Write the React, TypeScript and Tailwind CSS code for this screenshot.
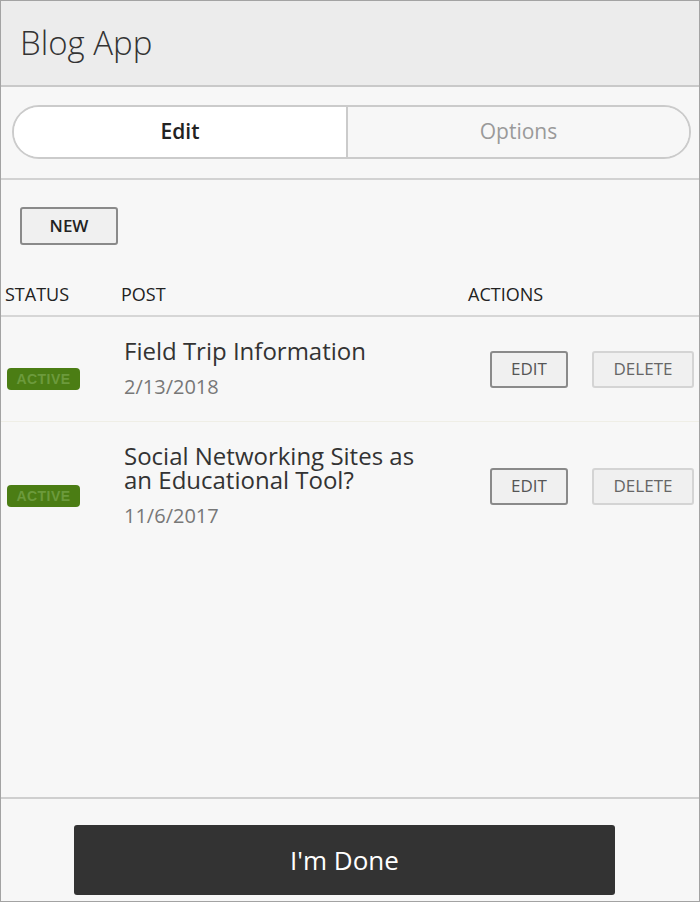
import React from "react"

const posts = [
  { title: "Field Trip Information", date: "2/13/2018" },
  { title: "Social Networking Sites as an Educational Tool?", date: "11/6/2017" },
]

function Badge() {
  return (
    <span className="inline-flex items-center justify-center w-[73px] h-[22px] rounded-[4px] bg-[#4b7d14] text-[14px] font-bold tracking-[0.03em] text-[#6c9a3c] font-['Liberation_Sans',sans-serif]">
      ACTIVE
    </span>
  )
}

export default function App() {
  return (
    <div className="w-[700px] h-[902px] flex flex-col border border-[#a3a3a3] bg-[#f7f7f7] font-['Open_Sans',sans-serif] text-[#333]">
      {/* Header */}
      <div className="h-[86px] shrink-0 bg-[#ececec] border-b-2 border-[#c9c9c9] flex items-center px-[19px]">
        <h1 className="text-[33px] font-light text-[#333] leading-none pb-[2px]">Blog App</h1>
      </div>

      {/* Tabs */}
      <div className="h-[93px] shrink-0 border-b-2 border-[#d2d2d2] pl-[11px] pr-[8px] pt-[18px]">
        <div className="flex h-[54px] rounded-full border-2 border-[#cbcbcb] overflow-hidden">
          <div className="w-[334px] shrink-0 bg-white flex items-center justify-center text-[21px] font-semibold text-[#222] border-r-2 border-[#cbcbcb]">
            Edit
          </div>
          <div className="flex-1 bg-[#f7f7f7] flex items-center justify-center text-[21px] text-[#9a9a9a]">
            Options
          </div>
        </div>
      </div>

      {/* Content */}
      <div className="flex-1 flex flex-col">
        <div className="pl-[19px] pt-[27px]">
          <button className="w-[98px] h-[38px] rounded-[3px] border-2 border-[#8a8a8a] bg-[#f0f0f0] text-[17px] font-semibold text-[#222]">
            NEW
          </button>
        </div>

        <div className="flex items-center h-[44px] mt-[28px] border-b-2 border-[#d6d6d6] text-[18px] text-[#222]">
          <div className="w-[120px] pl-[4px]">STATUS</div>
          <div className="w-[347px]">POST</div>
          <div>ACTIONS</div>
        </div>

        {posts.map((p, i) => (
          <div
            key={i}
            className={`flex items-center pt-[22px] pb-[22px] ${i === 0 ? "border-b border-[#efeee6]" : ""}`}
          >
            <div className="w-[123px] pl-[6px] pt-[18px]">
              <Badge />
            </div>
            <div className="w-[366px]">
              <div className="w-[300px] text-[24px] leading-[24px] text-[#333]">{p.title}</div>
              <div className="text-[20px] leading-[24px] mt-[12px] text-[#777]">{p.date}</div>
            </div>
            <div className="flex gap-[24px]">
              <button className="w-[78px] h-[37px] rounded-[3px] border-2 border-[#8a8a8a] bg-[#f0f0f0] text-[17px] text-[#555]">
                EDIT
              </button>
              <button className="w-[102px] h-[37px] rounded-[3px] border-2 border-[#d4d4d4] bg-[#f0f0f0] text-[17px] text-[#666]">
                DELETE
              </button>
            </div>
          </div>
        ))}
      </div>

      {/* Footer */}
      <div className="h-[104px] shrink-0 border-t-2 border-[#cfcfcf] flex pl-[73px] pt-[26px]">
        <button className="w-[541px] h-[70px] rounded-[3px] bg-[#333] text-white text-[26px]">
          I'm Done
        </button>
      </div>
    </div>
  )
}
